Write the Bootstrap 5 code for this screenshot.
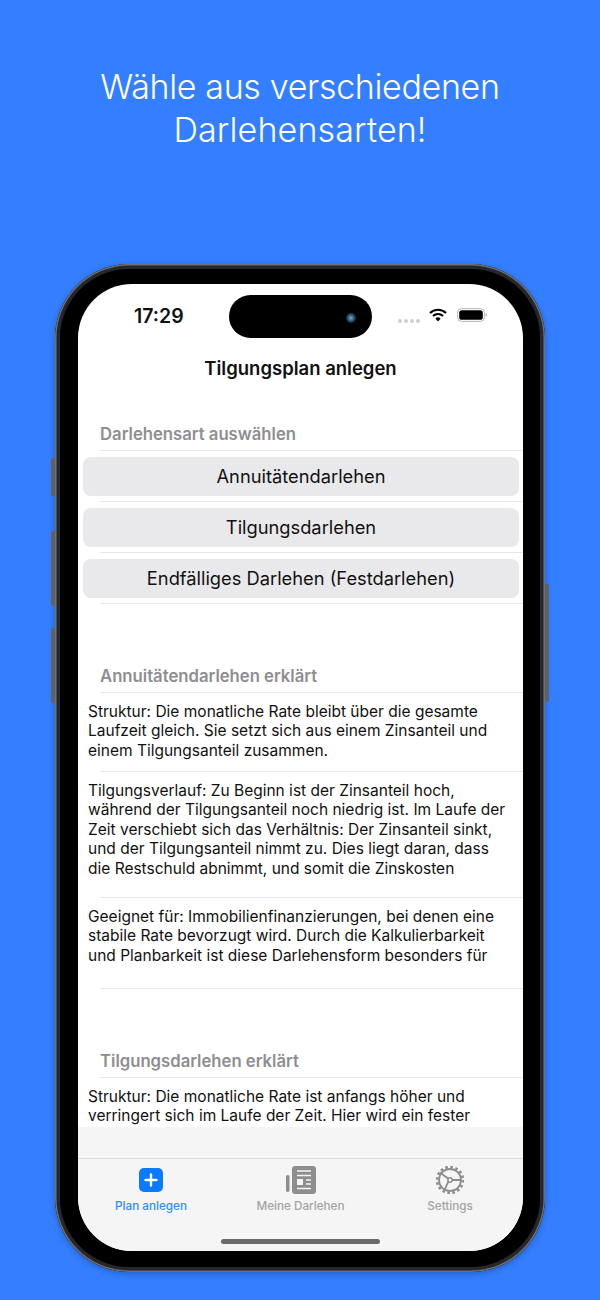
<!DOCTYPE html>
<html lang="de">
<head>
<meta charset="utf-8">
<title>Tilgungsplan</title>
<link href="https://cdn.jsdelivr.net/npm/bootstrap@5.3.0/dist/css/bootstrap.min.css" rel="stylesheet">
<style>
html,body{height:100%;}
body{background:#337fff;font-family:Inter,"Liberation Sans",sans-serif;color:#111;overflow:hidden;width:600px;height:1300px;}
.promo-title{color:#fff;font-weight:300;font-size:34px;line-height:43px;height:264px;padding-top:65px;margin:0;text-align:center;}
.promo-a{letter-spacing:-.34px;}
.promo-b{letter-spacing:.13px;}
.phone-shell{position:relative;width:490px;height:1008px;margin-left:55px;background:#000;border-radius:74px;padding:20px 22px 21px 23px;box-shadow:inset 0 0 0 1.5px #6d7074,inset 0 0 0 5px #26272a,0 2px 6px rgba(0,0,40,.25);}
.side-key{position:absolute;width:4px;background:#5e6166;}
.key-a{left:-4px;top:194px;height:38px;border-radius:2px 0 0 2px;}
.key-b{left:-4px;top:267px;height:75px;border-radius:2px 0 0 2px;}
.key-c{left:-4px;top:364px;height:75px;border-radius:2px 0 0 2px;}
.key-d{right:-4px;top:320px;height:118px;border-radius:0 2px 2px 0;}
.phone-screen{height:967px;background:#fff;border-radius:54px;overflow:hidden;}
.status-row{height:65px;position:relative;flex:none;}
.clock{position:absolute;left:56px;top:21px;font-size:19.5px;font-weight:600;line-height:22px;}
.island{position:absolute;left:151px;top:11px;width:143px;height:43px;border-radius:22px;background:#000;}
.lens{position:absolute;left:117px;top:18px;width:10px;height:10px;border-radius:50%;background:radial-gradient(circle at 50% 50%,#6fb2c9 0,#1d3f55 55%,#050a10 100%);}
.signal-dots{position:absolute;left:320px;top:35px;display:flex;gap:2px;}
.signal-dots i{width:4px;height:4px;border-radius:50%;background:#cfcfcf;display:block;}
.wifi-glyph{position:absolute;left:351px;top:24px;}
.batt-glyph{position:absolute;left:379px;top:24px;}
.nav-heading{height:39px;flex:none;font-size:18.5px;font-weight:600;line-height:39px;text-align:center;}
.scroll-body{flex:1 1 auto;min-height:0;overflow:hidden;}
.group-head{margin:0 0 0 22px;height:89px;padding-bottom:6px;display:flex;align-items:flex-end;color:#8e8e92;font-weight:600;font-size:16.7px;line-height:20px;border-bottom:1px solid #e7e7e9;}
.group-head.first{height:63px;}
.action-row{height:51px;padding:6px 4px 5px 5px;position:relative;}
.action-row::after{content:"";position:absolute;left:22px;right:0;bottom:0;border-bottom:1px solid #e7e7e9;}
.action-btn{height:39px;width:100%;background:#e9e9eb;border:0;border-radius:8px;color:#111;font-size:18.3px;line-height:39px;padding:0;}
.copy-row{padding:9px 10px 0;font-size:15.5px;line-height:19.45px;position:relative;overflow:hidden;}
.copy-row::after{content:"";position:absolute;left:22px;right:0;bottom:0;border-bottom:1px solid #e7e7e9;}
.copy-row p{margin:0;white-space:nowrap;}
.h-79{height:79px;}.h-126{height:126px;}.h-91{height:91px;}.h-open{height:60px;}
.copy-row.h-open::after{display:none;}
.tab-area{flex:none;height:124px;background:#f5f5f5;}
.tab-spacer{height:31px;border-bottom:1px solid #dcdcdc;box-sizing:content-box;}
.tab-col{flex:none;width:146px;text-align:center;padding-top:7px;font-size:11.7px;font-weight:500;line-height:14px;color:#a3a3a3;}
.tab-mid{width:153px;}
.tab-icon{height:28px;margin-bottom:5px;display:flex;align-items:center;justify-content:center;}
.tab-on{color:#2f8cf5;}
.home-bar{width:159px;height:5px;border-radius:3px;background:#6a6a6a;margin:26px auto 0;}
</style>
</head>
<body>
<h1 class="promo-title"><span class="promo-a">Wähle aus verschiedenen</span><br><span class="promo-b">Darlehensarten!</span></h1>
<div class="phone-shell">
  <div class="side-key key-a"></div><div class="side-key key-b"></div><div class="side-key key-c"></div><div class="side-key key-d"></div>
  <div class="phone-screen d-flex flex-column">
    <div class="status-row">
      <span class="clock">17:29</span>
      <div class="island"><span class="lens"></span></div>
      <div class="signal-dots"><i></i><i></i><i></i><i></i></div>
      <svg class="wifi-glyph" width="18" height="14" viewBox="0 0 18 14"><path d="M1 5a11.5 11.5 0 0 1 16 0" fill="none" stroke="#000" stroke-width="2.2"/><path d="M4 8a7.2 7.2 0 0 1 10 0" fill="none" stroke="#000" stroke-width="2.2"/><path d="M9 13.6l-2.6-3a3.6 3.6 0 0 1 5.2 0z" fill="#000"/></svg>
      <svg class="batt-glyph" width="30" height="14" viewBox="0 0 30 14"><rect x=".6" y=".6" width="26.8" height="12.8" rx="4" fill="none" stroke="#b5b5b5" stroke-width="1"/><rect x="2.2" y="2.2" width="23.6" height="9.6" rx="2.6" fill="#000"/><path d="M28.6 5v4a2.2 2.2 0 0 0 0-4z" fill="#b5b5b5"/></svg>
    </div>
    <div class="nav-heading">Tilgungsplan anlegen</div>
    <div class="scroll-body">
      <div class="group-head first">Darlehensart auswählen</div>
      <div class="action-row"><button class="btn action-btn" type="button">Annuitätendarlehen</button></div>
      <div class="action-row"><button class="btn action-btn" type="button">Tilgungsdarlehen</button></div>
      <div class="action-row"><button class="btn action-btn" type="button">Endfälliges Darlehen (Festdarlehen)</button></div>
      <div class="group-head">Annuitätendarlehen erklärt</div>
      <div class="copy-row h-79"><p>Struktur: Die monatliche Rate bleibt über die gesamte<br>Laufzeit gleich. Sie setzt sich aus einem Zinsanteil und<br>einem Tilgungsanteil zusammen.</p></div>
      <div class="copy-row h-126"><p>Tilgungsverlauf: Zu Beginn ist der Zinsanteil hoch,<br>während der Tilgungsanteil noch niedrig ist. Im Laufe der<br>Zeit verschiebt sich das Verhältnis: Der Zinsanteil sinkt,<br>und der Tilgungsanteil nimmt zu. Dies liegt daran, dass<br>die Restschuld abnimmt, und somit die Zinskosten</p></div>
      <div class="copy-row h-91"><p>Geeignet für: Immobilienfinanzierungen, bei denen eine<br>stabile Rate bevorzugt wird. Durch die Kalkulierbarkeit<br>und Planbarkeit ist diese Darlehensform besonders für</p></div>
      <div class="group-head">Tilgungsdarlehen erklärt</div>
      <div class="copy-row h-open"><p>Struktur: Die monatliche Rate ist anfangs höher und<br>verringert sich im Laufe der Zeit. Hier wird ein fester</p></div>
    </div>
    <div class="tab-area">
      <div class="tab-spacer"></div>
      <div class="d-flex">
        <div class="tab-col tab-on">
          <div class="tab-icon"><svg width="24" height="24" viewBox="0 0 24 24"><rect width="24" height="24" rx="5" fill="#0a7bff"/><path d="M12 6.5v11M6.5 12h11" stroke="#fff" stroke-width="2.4" stroke-linecap="round"/></svg></div>
          Plan anlegen
        </div>
        <div class="tab-col tab-mid">
          <div class="tab-icon"><svg width="30" height="28" viewBox="0 0 30 28"><rect x="6" y="0" width="24" height="28" rx="3" fill="#8e8e8e"/><rect x="0" y="9" width="3.5" height="17" rx="1.7" fill="#8e8e8e"/><path d="M11 5h14M11 9.5h14" stroke="#f5f5f5" stroke-width="1.6"/><rect x="11" y="13" width="6" height="6" fill="#f5f5f5"/><path d="M20 14h5M20 18h5M11 22.5h14" stroke="#f5f5f5" stroke-width="1.6"/></svg></div>
          Meine Darlehen
        </div>
        <div class="tab-col">
          <div class="tab-icon"><svg width="28" height="28" viewBox="0 0 28 28"><circle cx="14" cy="14" r="11" fill="none" stroke="#8e8e8e" stroke-width="1.8"/><circle cx="14" cy="14" r="13" fill="none" stroke="#8e8e8e" stroke-width="2.6" stroke-dasharray="2.6 2.5"/><path d="M4 6.5l8.4 6.3M12.4 15.4L8.5 24M16 14h9" stroke="#8e8e8e" stroke-width="1.8"/><circle cx="14" cy="14" r="2.2" fill="none" stroke="#8e8e8e" stroke-width="1.4"/></svg></div>
          Settings
        </div>
      </div>
      <div class="home-bar"></div>
    </div>
  </div>
</div>
<script src="https://cdn.jsdelivr.net/npm/bootstrap@5.3.0/dist/js/bootstrap.bundle.min.js"></script>
</body>
</html>
